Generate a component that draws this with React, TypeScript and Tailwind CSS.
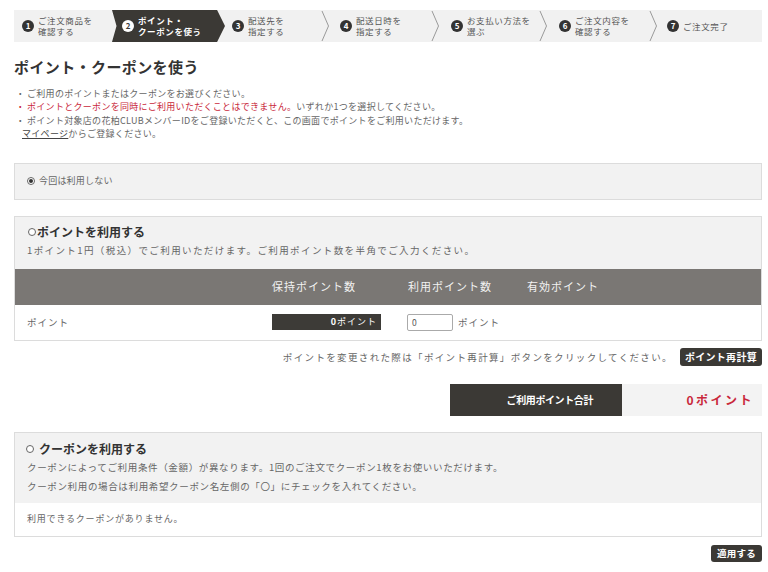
import React from "react";

const steps = [
  { n: 1, l1: "ご注文商品を", l2: "確認する", w: "w-[98px]", pl: "pl-[8px]", chev: false, active: false },
  { n: 2, l1: "ポイント・", l2: "クーポンを使う", w: "w-[113px]", pl: "pl-[10px]", chev: false, active: true },
  { n: 3, l1: "配送先を", l2: "指定する", w: "w-[105px]", pl: "pl-[7px]", chev: true, active: false },
  { n: 4, l1: "配送日時を", l2: "指定する", w: "w-[110px]", pl: "pl-[10px]", chev: true, active: false },
  { n: 5, l1: "お支払い方法を", l2: "選ぶ", w: "w-[108px]", pl: "pl-[11px]", chev: true, active: false },
  { n: 6, l1: "ご注文内容を", l2: "確認する", w: "w-[110px]", pl: "pl-[11px]", chev: true, active: false },
  { n: 7, l1: "ご注文完了", l2: "", w: "w-[104px]", pl: "pl-[9px]", chev: false, active: false },
];

function Chevron() {
  return (
    <svg width="10" height="32" viewBox="0 0 10 32" className="shrink-0">
      <path d="M2 1 L8.5 16 L2 31" fill="none" stroke="#9a9a9a" strokeWidth="1" />
    </svg>
  );
}

function StepBar() {
  return (
    <div className="flex h-[32px] bg-[#f1f1f1]">
      {steps.map((s) => (
        <div
          key={s.n}
          className={`${s.w} flex items-center ${
            s.active
              ? "bg-[#3b3935] [clip-path:polygon(0_0,93%_0,100%_50%,93%_100%,0_100%,4%_50%)]"
              : ""
          }`}
        >
          <div className={`flex-1 flex items-center gap-[4px] ${s.pl}`}>
            <span
              className={`w-[12px] h-[12px] rounded-full flex items-center justify-center text-[8px] font-bold leading-none shrink-0 ${
                s.active ? "bg-white text-[#3b3935]" : "bg-[#333] text-white"
              }`}
            >
              {s.n}
            </span>
            <div
              className={`text-[8.5px] leading-[11px] tracking-[0.6px] ${
                s.active ? "text-white font-bold" : "text-[#555]"
              }`}
            >
              <div>{s.l1}</div>
              {s.l2 && <div>{s.l2}</div>}
            </div>
          </div>
          {s.chev && <Chevron />}
        </div>
      ))}
    </div>
  );
}

function Radio({ checked }: { checked?: boolean }) {
  return (
    <span className="w-[8px] h-[8px] rounded-full border border-[#666] bg-white flex items-center justify-center shrink-0">
      {checked && <span className="w-[4px] h-[4px] rounded-full bg-[#333]" />}
    </span>
  );
}

export default function App() {
  return (
    <div className="w-[768px] h-[572px] bg-white overflow-hidden font-['Noto_Sans_CJK_JP','Noto_Sans',sans-serif] text-[#666]">
      <div className="ml-[14px] w-[748px] pt-[10px]">
        <StepBar />

        <h1 className="mt-[15px] text-[15px] leading-[20px] font-bold text-[#333] tracking-[0.4px]">
          ポイント・クーポンを使う
        </h1>

        {/* notes */}
        <ul className="mt-[10px] text-[9px] leading-[13.4px] tracking-[0.3px]">
          <li className="flex">
            <span className="w-[13px] text-center">・</span>
            <span>ご利用のポイントまたはクーポンをお選びください。</span>
          </li>
          <li className="flex">
            <span className="w-[13px] text-center text-[#c9283b]">・</span>
            <span>
              <span className="text-[#c9283b]">ポイントとクーポンを同時にご利用いただくことはできません。</span>
              いずれか1つを選択してください。
            </span>
          </li>
          <li className="flex">
            <span className="w-[13px] text-center">・</span>
            <span>ポイント対象店の花柏CLUBメンバーIDをご登録いただくと、この画面でポイントをご利用いただけます。</span>
          </li>
          <li className="pl-[8px]">
            <span className="underline text-[#444]">マイページ</span>からご登録ください。
          </li>
        </ul>

        {/* no use */}
        <div className="mt-[22px] h-[37px] border border-[#dcdcdc] bg-[#f2f2f2] flex items-center gap-[4px] pl-[12px] text-[9px] tracking-[0.2px]">
          <Radio checked />
          <span>今回は利用しない</span>
        </div>

        {/* points */}
        <div className="mt-[16px] border border-[#dcdcdc]">
          <div className="h-[52px] bg-[#f2f2f2] pl-[13px] pt-[7px]">
            <div className="flex items-center gap-[1px] text-[12px] leading-[16px] font-bold text-[#333]">
              <Radio />
              <span>ポイントを利用する</span>
            </div>
            <div className="mt-[3px] -ml-[1px] text-[9.5px] leading-[14px] tracking-[1.4px]">
              1ポイント1円（税込）でご利用いただけます。ご利用ポイント数を半角でご入力ください。
            </div>
          </div>
          <div className="h-[36px] bg-[#7a7774] grid grid-cols-[257px_135px_120px_1fr] items-center text-[11px] tracking-[1px] text-[#f2f2f2]">
            <span />
            <span>保持ポイント数</span>
            <span className="pl-[1px]">利用ポイント数</span>
            <span>有効ポイント</span>
          </div>
          <div className="h-[35px] bg-white grid grid-cols-[257px_135px_120px_1fr] items-center text-[9.5px] tracking-[1px]">
            <span className="pl-[12px]">ポイント</span>
            <span className="w-[109px] h-[16px] bg-[#3d3b37] text-white flex items-center justify-end pr-[4px] text-[9px]">
              <b>0</b>ポイント
            </span>
            <span className="flex items-center gap-[5px]">
              <span className="w-[46px] h-[17px] border border-[#aaa] rounded-[2px] bg-white flex items-center pl-[4px] text-[8.5px] text-[#555]">
                0
              </span>
              <span>ポイント</span>
            </span>
            <span />
          </div>
        </div>

        {/* recalc */}
        <div className="mt-[7px] h-[18px] flex items-center justify-end gap-[7px]">
          <span className="text-[9.5px] tracking-[1.35px]">
            ポイントを変更された際は「ポイント再計算」ボタンをクリックしてください。
          </span>
          <button className="h-[18px] px-[5px] rounded-[3px] bg-[#3b3935] text-white text-[10px] font-bold tracking-[0.3px]">
            ポイント再計算
          </button>
        </div>

        {/* total */}
        <div className="mt-[18px] h-[32px] flex justify-end">
          <div className="w-[172px] bg-[#3b3935] text-white text-[10px] font-bold tracking-[-0.4px] flex items-center justify-end pr-[29px]">
            ご利用ポイント合計
          </div>
          <div className="w-[140px] bg-[#f3f3f3] text-[#c9283b] text-[12px] font-bold tracking-[2.5px] flex items-center justify-end pr-[8px]">
            0ポイント
          </div>
        </div>

        {/* coupon */}
        <div className="mt-[16px] border border-[#dcdcdc]">
          <div className="h-[70px] bg-[#f2f2f2] pl-[11px] pt-[8px]">
            <div className="flex items-center gap-[5px] text-[12px] leading-[16px] font-bold text-[#333]">
              <Radio />
              <span>クーポンを利用する</span>
            </div>
            <div className="text-[9.5px] leading-[19px] tracking-[0.65px] pl-[1px] pt-[1px]">
              <div>クーポンによってご利用条件（金額）が異なります。1回のご注文でクーポン1枚をお使いいただけます。</div>
              <div>クーポン利用の場合は利用希望クーポン名左側の「〇」にチェックを入れてください。</div>
            </div>
          </div>
          <div className="h-[33px] bg-white flex items-center pl-[12px] text-[9px] tracking-[0.8px]">
            利用できるクーポンがありません。
          </div>
        </div>

        <div className="mt-[8px] flex justify-end">
          <button className="h-[17px] w-[51px] rounded-[3px] bg-[#3b3935] text-white text-[9.5px] font-bold tracking-[0.3px]">
            適用する
          </button>
        </div>
      </div>
    </div>
  );
}
